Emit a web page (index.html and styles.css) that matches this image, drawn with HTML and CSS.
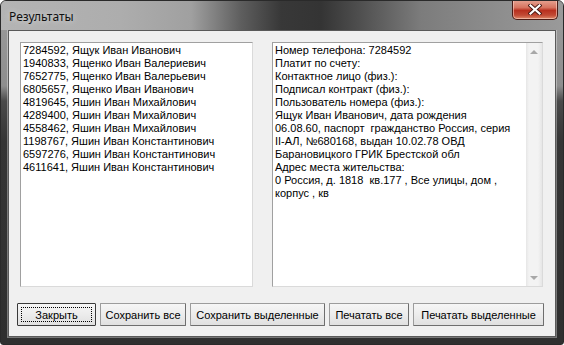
FILE: index.html
```html
<!DOCTYPE html>
<html>
<head>
<meta charset="utf-8">
<link rel="stylesheet" href="styles.css">
</head>
<body>
<div class="window">
  <div class="titlebar">
    <span class="title">Результаты</span>
    <div class="close">
      <svg width="14" height="11" viewBox="0 0 14 11">
        <path d="M2.5 1.5 L11.5 9.5 M11.5 1.5 L2.5 9.5" stroke="#4a1a14" stroke-width="4" stroke-linecap="square" fill="none"/>
        <path d="M2.5 1.5 L11.5 9.5 M11.5 1.5 L2.5 9.5" stroke="#ffffff" stroke-width="2.2" stroke-linecap="square" fill="none"/>
      </svg>
    </div>
  </div>
  <div class="client">
    <div class="panes">
      <div class="listbox">
        <div>7284592, Ящук Иван Иванович</div>
        <div>1940833, Ященко Иван Валериевич</div>
        <div>7652775, Ященко Иван Валерьевич</div>
        <div>6805657, Ященко Иван Иванович</div>
        <div>4819645, Яшин Иван Михайлович</div>
        <div>4289400, Яшин Иван Михайлович</div>
        <div>4558462, Яшин Иван Михайлович</div>
        <div>1198767, Яшин Иван Константинович</div>
        <div>6597276, Яшин Иван Константинович</div>
        <div>4611641, Яшин Иван Константинович</div>
      </div>
      <div class="memo">
        <div class="memo-text">
          <div>Номер телефона: 7284592</div>
          <div>Платит по счету:</div>
          <div>Контактное лицо (физ.):</div>
          <div>Подписал контракт (физ.):</div>
          <div>Пользователь номера (физ.):</div>
          <div>Ящук Иван Иванович, дата рождения</div>
          <div>06.08.60, паспорт&nbsp; гражданство Россия, серия</div>
          <div>II-АЛ, №680168, выдан 10.02.78 ОВД</div>
          <div>Барановицкого ГРИК Брестской обл</div>
          <div>Адрес места жительства:</div>
          <div>0 Россия, д. 1818&nbsp; кв.177 , Все улицы, дом ,</div>
          <div>корпус , кв</div>
        </div>
        <div class="scrollbar">
          <div class="arrow up"></div>
          <div class="track"></div>
          <div class="arrow down"></div>
        </div>
      </div>
    </div>
    <div class="buttons">
      <button class="btn default w1">Закрыть</button>
      <button class="btn w2">Сохранить все</button>
      <button class="btn w3">Сохранить выделенные</button>
      <button class="btn w4">Печатать все</button>
      <button class="btn w5">Печатать выделенные</button>
    </div>
  </div>
</div>
</body>
</html>
```
FILE: styles.css
```css
html, body {
  margin: 0;
  padding: 0;
  background: #ffffff;
}
.window {
  width: 564px;
  height: 345px;
  box-sizing: border-box;
  border: 1px solid #2a2a2a;
  border-radius: 6px 6px 3px 3px;
  overflow: hidden;
  background: linear-gradient(to bottom, #9c9c9c 0, #8e8e8e 85px, #4a4a4a 100px, #353535 140px, #2f2f2f 100%);
  display: flex;
  flex-direction: column;
}
.titlebar {
  height: 29px;
  flex: none;
  position: relative;
  background: linear-gradient(to right, #b4b4b4 0, #adadad 120px, #a0a0a0 190px, #5e5e5e 240px, #383838 280px, #343434 320px, #505050 360px, #7c7c7c 420px, #8a8a8a 480px, #9a9a9a 100%);
}
.title {
  position: absolute;
  left: 8px;
  top: 8px;
  font-family: "Noto Sans", "Open Sans", sans-serif;
  font-size: 12px;
  line-height: 16px;
  color: #101010;
  text-shadow: 0 0 6px rgba(255,255,255,0.6);
}
.close {
  position: absolute;
  right: 5px;
  top: -1px;
  width: 46px;
  height: 20px;
  box-sizing: border-box;
  border: 1px solid #4c1c16;
  border-top: none;
  border-radius: 0 0 5px 5px;
  background: linear-gradient(to bottom, #e7a594 0, #d6735f 40%, #b8301f 55%, #c24a35 80%, #de8a6a 100%);
  box-shadow: inset 0 0 0 1px rgba(255,220,210,0.55);
  display: flex;
  align-items: center;
  justify-content: center;
}
.client {
  flex: 1;
  margin: 0 7px 7px 7px;
  background: #f0f0f0;
  border: 1px solid #5a5a5a;
  box-shadow: 0 0 0 1px rgba(255,255,255,0.35);
  padding: 11px 11px 0 11px;
  display: flex;
  flex-direction: column;
  font-family: "Liberation Sans", Arial, sans-serif;
  font-size: 11px;
  line-height: 13px;
  color: #000;
}
.panes {
  display: flex;
  gap: 19px;
  height: 245px;
}
.listbox {
  width: 233px;
  box-sizing: border-box;
  background: #fff;
  border: 1px solid #a0a0a0;
  border-right-color: #dadada;
  border-bottom-color: #dadada;
  padding: 1px 2px;
  white-space: nowrap;
}
.memo {
  width: 271px;
  box-sizing: border-box;
  background: #fff;
  border: 1px solid #a0a0a0;
  border-right-color: #dadada;
  border-bottom-color: #dadada;
  display: flex;
}
.memo-text {
  flex: 1;
  padding: 1px 2px;
  white-space: nowrap;
  overflow: hidden;
}
.scrollbar {
  width: 16px;
  display: flex;
  flex-direction: column;
  background: linear-gradient(to right, #e6e6e6 0, #f3f3f3 3px, #f3f3f3 12px, #e6e6e6 100%);
}
.arrow {
  height: 17px;
  display: flex;
  align-items: center;
  justify-content: center;
}
.arrow::before {
  content: "";
  width: 0;
  height: 0;
  border-left: 4px solid transparent;
  border-right: 4px solid transparent;
}
.arrow.up::before {
  border-bottom: 4px solid #a8a8a8;
}
.arrow.down::before {
  border-top: 4px solid #a8a8a8;
}
.track {
  flex: 1;
}
.buttons {
  display: flex;
  gap: 4px;
  margin-top: 16px;
  margin-left: -3px;
}
.btn {
  height: 23px;
  box-sizing: border-box;
  border: 1px solid #9c9c9c;
  border-right-color: #6e6e6e;
  border-bottom-color: #6e6e6e;
  border-radius: 1px;
  background: linear-gradient(to bottom, #f6f6f6 0, #ececec 50%, #e0e0e0 100%);
  font-family: "Liberation Sans", Arial, sans-serif;
  font-size: 11px;
  white-space: nowrap;
  color: #000;
  padding: 0;
  position: relative;
}
.btn.default {
  border-color: #3a3a3a;
}
.btn.default::after {
  content: "";
  position: absolute;
  left: 3px;
  top: 3px;
  right: 3px;
  bottom: 3px;
  border: 1px dotted #000;
}
.w1 { width: 79px; }
.w2 { width: 86px; }
.w3 { width: 135px; }
.w4 { width: 80px; }
.w5 { width: 131px; }
```
